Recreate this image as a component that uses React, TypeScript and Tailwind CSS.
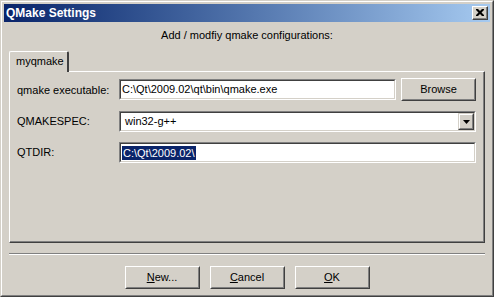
import React from "react";

const font = { fontFamily: '"Liberation Sans", Arial, sans-serif' };

function Sunken({ className, children }: { className?: string; children?: React.ReactNode }) {
  return (
    <div className={`border border-t-[#808080] border-l-[#808080] border-r-white border-b-white ${className ?? ""}`}>
      <div className="h-full w-full border border-t-[#404040] border-l-[#404040] border-r-[#d4d0c8] border-b-[#d4d0c8] bg-white flex items-center">
        {children}
      </div>
    </div>
  );
}

function Button({ className, children }: { className?: string; children?: React.ReactNode }) {
  return (
    <div className={`border border-t-white border-l-white border-r-[#404040] border-b-[#404040] ${className ?? ""}`}>
      <div className="h-full w-full border border-t-[#d4d0c8] border-l-[#d4d0c8] border-r-[#808080] border-b-[#808080] flex items-center justify-center text-[11px] text-black">
        {children}
      </div>
    </div>
  );
}

export default function App() {
  return (
    <div className="w-[494px] h-[297px] bg-[#d4d0c8] border border-t-[#d4d0c8] border-l-[#d4d0c8] border-r-[#404040] border-b-[#404040]" style={font}>
      <div className="h-full w-full border border-t-white border-l-white border-r-[#808080] border-b-[#808080] p-[2px] flex flex-col">
        {/* Title bar */}
        <div className="h-[18px] flex items-center justify-between bg-gradient-to-r from-[#0a246a] to-[#a6caf0] pl-[2px] pr-[2px]">
          <span className="text-white font-bold text-[12px] leading-none">QMake Settings</span>
          <div className="w-[16px] h-[14px] border border-t-white border-l-white border-r-[#404040] border-b-[#404040] bg-[#d4d0c8]">
            <div className="h-full w-full border-r border-b border-r-[#808080] border-b-[#808080] flex items-center justify-center">
              <svg width="8" height="7" viewBox="0 0 8 7">
                <path d="M0 0h2l2 2 2-2h2v1l-2.5 2.5L8 6v1H6L4 5 2 7H0V6l2.5-2.5L0 1z" fill="#000" />
              </svg>
            </div>
          </div>
        </div>

        {/* Subtitle */}
        <div className="mt-[7px] h-[13px] text-center text-[11px] leading-[13px] text-black">
          Add / modfiy qmake configurations:
        </div>

        {/* Tab */}
        <div className="mt-[9px] ml-[5px] flex">
          <div className="relative z-10 h-[21px] w-[60px] border-t border-l border-r-2 border-t-white border-l-white border-r-[#404040] rounded-t-[2px] bg-[#d4d0c8] text-[11px] pl-[6px] pt-[3px] leading-[13px] text-black">
            myqmake
          </div>
        </div>

        {/* Pane */}
        <div className="-mt-[1px] mx-[5px] h-[172px] border border-t-white border-l-white border-r-[#404040] border-b-[#404040]">
          <div className="h-full w-full border-r border-b border-r-[#808080] border-b-[#808080] pt-[6px] px-[7px] flex flex-col gap-[10px] text-[11px] text-black">
            <div className="flex items-center h-[23px]">
              <div className="w-[102px] pt-[1px]">qmake executable:</div>
              <Sunken className="w-[277px] h-[21px]">
                <span className="pl-[1px]">C:\Qt\2009.02\qt\bin\qmake.exe</span>
              </Sunken>
              <Button className="ml-[5px] w-[75px] h-[23px]">Browse</Button>
            </div>
            <div className="flex items-center h-[21px]">
              <div className="w-[102px]">QMAKESPEC:</div>
              <Sunken className="w-[357px] h-[21px]">
                <span className="pl-[4px] flex-1">win32-g++</span>
                <div className="w-[16px] h-[17px] border border-t-[#d4d0c8] border-l-[#d4d0c8] border-r-[#404040] border-b-[#404040] bg-[#d4d0c8]">
                  <div className="h-full w-full border border-t-white border-l-white border-r-[#808080] border-b-[#808080] flex items-center justify-center">
                    <svg width="7" height="4" viewBox="0 0 7 4">
                      <path d="M0 0h7L3.5 4z" fill="#000" />
                    </svg>
                  </div>
                </div>
              </Sunken>
            </div>
            <div className="flex items-center h-[21px]">
              <div className="w-[102px]">QTDIR:</div>
              <Sunken className="w-[357px] h-[21px]">
                <span className="ml-[1px] bg-[#0a246a] text-white px-[1px] leading-[14px]">C:\Qt\2009.02\</span>
              </Sunken>
            </div>
          </div>
        </div>

        {/* Separator */}
        <div className="mt-[10px] mx-[5px] h-[2px] border-t border-t-[#808080] border-b border-b-white" />

        {/* Buttons */}
        <div className="mt-[11px] flex justify-center gap-[10px]">
          <Button className="w-[75px] h-[23px]"><span><u>N</u>ew...</span></Button>
          <Button className="w-[75px] h-[23px]"><span><u>C</u>ancel</span></Button>
          <Button className="w-[75px] h-[23px]"><span><u>O</u>K</span></Button>
        </div>
      </div>
    </div>
  );
}
